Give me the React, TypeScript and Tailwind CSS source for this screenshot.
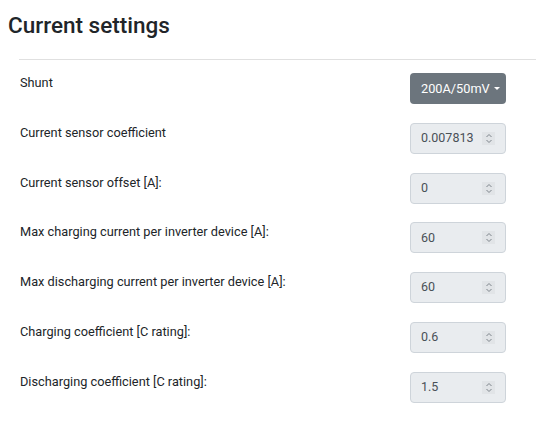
import React from "react";

const rows: { label: string; value: string }[] = [
  { label: "Current sensor coefficient", value: "0.007813" },
  { label: "Current sensor offset [A]:", value: "0" },
  { label: "Max charging current per inverter device [A]:", value: "60" },
  { label: "Max discharging current per inverter device [A]:", value: "60" },
  { label: "Charging coefficient [C rating]:", value: "0.6" },
  { label: "Discharging coefficient [C rating]:", value: "1.5" },
];

function Spinner() {
  return (
    <div className="w-[13px] h-[13px] bg-[#e1e4e7] flex items-center justify-center">
      <svg width="8" height="11" viewBox="0 0 8 11" fill="none" stroke="#7d848b" strokeWidth="1">
        <path d="M1.5 4 L4 1.5 L6.5 4" />
        <path d="M1.5 7 L4 9.5 L6.5 7" />
      </svg>
    </div>
  );
}

export default function App() {
  return (
    <div className="w-[536px] h-[437px] bg-white text-[#212529]" style={{ fontFamily: "Roboto, 'Liberation Sans', sans-serif" }}>
      <h4 className="pl-[8px] pt-[12px] text-[22.5px] font-medium leading-[26px] text-[#212529]">Current settings</h4>
      <div className="ml-[19px] mt-[21px] border-t border-[#e0e0e0] pt-[12px]">
        <div className="flex items-start h-[49.8px]">
          <div className="w-[391px] pl-[1px] pt-[1px] text-[12.75px] leading-[19.5px] text-[#212529]">Shunt</div>
          <div className="w-[96px] h-[31px] rounded-[4px] bg-[#6c757d] text-white text-[12.75px] flex items-center pl-[11px] mt-[1px]">
            <span>200A/50mV</span>
            <svg className="ml-[4px]" width="6" height="4" viewBox="0 0 6 4">
              <path d="M0 0 L6 0 L3 3 Z" fill="#ffffff" />
            </svg>
          </div>
        </div>
        {rows.map((r) => (
          <div key={r.label} className="flex items-start h-[49.8px]">
            <div className="w-[391px] pl-[1px] pt-[1px] text-[12.75px] leading-[19.5px] text-[#212529]">{r.label}</div>
            <div className="w-[96px] h-[31px] rounded-[4px] bg-[#e9ecef] border border-[#ced4da] text-[12.5px] text-[#495057] flex items-center pl-[10px] pr-[10px] mt-[1px]">
              <span className="flex-1">{r.value}</span>
              <Spinner />
            </div>
          </div>
        ))}
      </div>
    </div>
  );
}
